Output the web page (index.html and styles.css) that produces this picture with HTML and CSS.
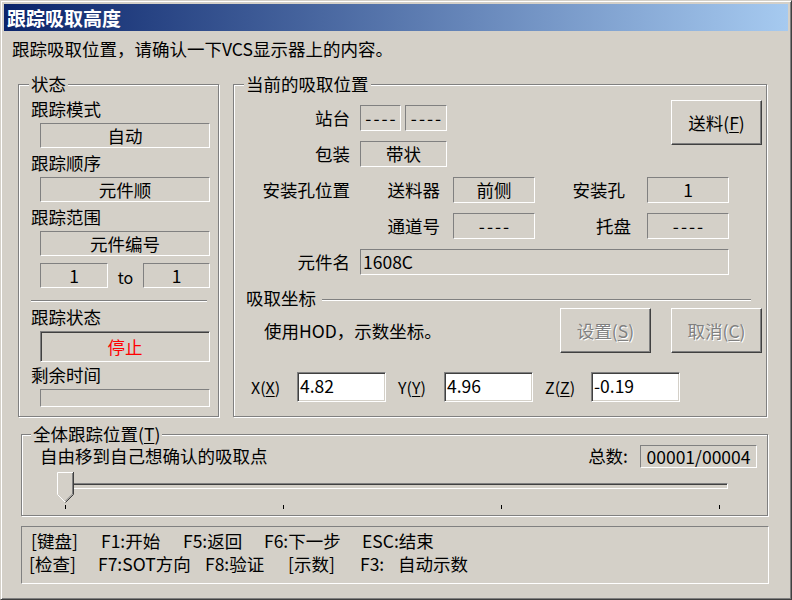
FILE: index.html
```html
<!DOCTYPE html>
<html lang="zh-CN">
<head>
<meta charset="utf-8">
<title>跟踪吸取高度</title>
<link rel="stylesheet" href="styles.css">
</head>
<body>
<div class="window">
  <div class="titlebar">跟踪吸取高度</div>
  <div class="client">
    <p class="desc">跟踪吸取位置，请确认一下VCS显示器上的内容。</p>

    <div class="main-row">
      <fieldset class="group status">
        <legend>状态</legend>
        <div class="lbl">跟踪模式</div>
        <div class="static sbox">自动</div>
        <div class="lbl mt5">跟踪顺序</div>
        <div class="static sbox">元件顺</div>
        <div class="lbl mt5">跟踪范围</div>
        <div class="static sbox">元件编号</div>
        <div class="range">
          <div class="static num1">1</div>
          <span class="to">to</span>
          <div class="static num2">1</div>
        </div>
        <div class="sep"></div>
        <div class="lbl mt5">跟踪状态</div>
        <div class="sunken state">停止</div>
        <div class="lbl mt3">剩余时间</div>
        <div class="static sbox empty"></div>
      </fieldset>

      <fieldset class="group current">
        <legend>当前的吸取位置</legend>
        <div class="pos-grid">
          <span class="glabel a-l1">站台</span>
          <div class="pair a-b1"><div class="static gbox dash st1">----</div><div class="static gbox dash st2">----</div></div>
          <button class="btn a-btn" type="button">送料(<u>F</u>)</button>
          <span class="glabel a-l2">包装</span>
          <div class="static gbox pack a-b2">带状</div>
          <span class="glabel a-l3">安装孔位置</span>
          <span class="glabel2 a-k3">送料器</span>
          <div class="static gbox a-v3">前侧</div>
          <span class="glabel4 a-k4">安装孔</span>
          <div class="static gbox a-v4">1</div>
          <span class="glabel2 a-k5">通道号</span>
          <div class="static gbox dash a-v5">----</div>
          <span class="glabel4 tray a-k6">托盘</span>
          <div class="static gbox dash a-v6">----</div>
          <span class="glabel a-l7">元件名</span>
          <div class="static gbox name a-v7">1608C</div>
        </div>

        <div class="subhead">
          <span>吸取坐标</span>
          <div class="rule"></div>
        </div>

        <div class="teach-row">
          <span>使用HOD，示数坐标。</span>
          <div class="btn-group">
            <button class="btn" type="button" disabled>设置(<u>S</u>)</button>
            <button class="btn" type="button" disabled>取消(<u>C</u>)</button>
          </div>
        </div>

        <div class="coords">
          <span class="coord-lbl">X(<u>X</u>)</span>
          <div class="edit">4.82</div>
          <span class="coord-lbl">Y(<u>Y</u>)</span>
          <div class="edit">4.96</div>
          <span class="coord-lbl">Z(<u>Z</u>)</span>
          <div class="edit last">-0.19</div>
        </div>
      </fieldset>
    </div>

    <fieldset class="group overall">
      <legend>全体跟踪位置(<u>T</u>)</legend>
      <div class="overall-top">
        <span class="hint">自由移到自己想确认的吸取点</span>
        <div class="total">
          <span>总数:</span>
          <div class="static total-box">00001/00004</div>
        </div>
      </div>
      <div class="slider">
        <div class="track"></div>
        <svg class="thumb" width="17" height="31" viewBox="0 0 17 31">
          <path d="M0.5 0.5 H16.5 V22.5 L8.5 30.5 L0.5 22.5 Z" fill="#d4d0c8"/>
          <path d="M8 30 L0.5 22.5 V0.5 H16" fill="none" stroke="#ffffff" stroke-width="1"/>
          <path d="M16.5 0 V22.5 L8.5 30.5" fill="none" stroke="#404040" stroke-width="1"/>
          <path d="M15.5 1 V22 L8.5 29" fill="none" stroke="#808080" stroke-width="1"/>
        </svg>
        <div class="ticks"><i></i><i></i><i></i><i></i></div>
      </div>
    </fieldset>

    <div class="static help">
      <div class="help-line l1">
        <span>[键盘]</span><span>F1:开始</span><span>F5:返回</span><span>F6:下一步</span><span>ESC:结束</span>
      </div>
      <div class="help-line l2">
        <span>[检查]</span><span>F7:SOT方向</span><span>F8:验证</span><span>[示数]</span><span>F3:</span><span>自动示数</span>
      </div>
    </div>
  </div>
</div>
</body>
</html>
```

FILE: styles.css
```css
* {
  box-sizing: border-box;
}

html,
body {
  margin: 0;
  padding: 0;
}

body {
  width: 792px;
  height: 600px;
  overflow: hidden;
  background: #d4d0c8;
  font-family: "Noto Sans CJK SC", "Noto Sans", sans-serif;
  font-size: 17.5px;
  line-height: 20px;
  color: #000;
}

u {
  text-decoration: underline;
  text-underline-offset: 2px;
}

/* window frame */
.window {
  width: 792px;
  height: 600px;
  border: 1px solid;
  border-color: #d4d0c8 #404040 #404040 #d4d0c8;
  box-shadow: inset 1px 1px #ffffff, inset -1px -1px #808080;
  padding: 3px;
  background: #d4d0c8;
  display: flex;
  flex-direction: column;
}

.titlebar {
  height: 27px;
  line-height: 27px;
  padding-left: 3px;
  background: linear-gradient(to right, #0a246a, #a6caf0);
  color: #ffffff;
  font-weight: bold;
  font-size: 19px;
}

.desc {
  margin: 8px 0 0 8px;
  line-height: 20px;
}

/* win classic group box */
.group {
  margin: 0;
  border: 1px solid #808080;
  box-shadow: inset 1px 1px #ffffff, 1px 1px #ffffff;
  min-width: 0;
}

.group legend {
  margin-left: 10px;
  padding: 0 2px;
  line-height: 20px;
  background: #d4d0c8;
}

/* borders */
.static {
  border: 1px solid;
  border-color: #808080 #ffffff #ffffff #808080;
  text-align: center;
  white-space: nowrap;
  overflow: hidden;
}

.sunken {
  border: 1px solid;
  border-color: #808080 #ffffff #ffffff #808080;
  box-shadow: inset 1px 1px #404040, inset -1px -1px #d4d0c8;
  text-align: center;
}

.btn {
  width: 91px;
  height: 45px;
  padding: 0;
  background: #d4d0c8;
  border: 1px solid;
  border-color: #ffffff #404040 #404040 #ffffff;
  box-shadow: inset -1px -1px #808080;
  font: inherit;
  color: #000;
}

.btn:disabled {
  color: #808080;
  text-shadow: 1px 1px #ffffff;
}

/* top row */
.main-row {
  display: flex;
  gap: 14px;
  margin: 15px 0 0 14px;
  align-items: stretch;
}

/* status */
.status {
  width: 201px;
  padding: 5px 0 9px 12px;
}

.status legend {
  margin-left: -2px;
}

.lbl {
  line-height: 20px;
  margin-bottom: 4px;
}

.mt5 {
  margin-top: 5px;
}

.mt3 {
  margin-top: 3px;
}

.sbox {
  width: 170px;
  height: 25px;
  line-height: 23px;
  margin-left: 9px;
}

.sbox.empty {
  height: 18px;
}

.range {
  display: flex;
  align-items: center;
  margin: 7px 0 0 9px;
}

.num1,
.num2 {
  height: 25px;
  line-height: 23px;
}

.num1 {
  width: 68px;
}

.num2 {
  width: 67px;
}

.to {
  width: 35px;
  text-align: center;
  font-size: 16px;
  padding-top: 3px;
}

.sep {
  width: 176px;
  height: 2px;
  margin-top: 12px;
  border-top: 1px solid #808080;
  border-bottom: 1px solid #ffffff;
}

.state {
  width: 170px;
  height: 31px;
  line-height: 29px;
  margin-left: 9px;
  color: #ff0000;
}

/* current pick position */
.current {
  width: 534px;
  padding: 6px 0 14px 0;
}

.pos-grid {
  display: grid;
  grid-template-columns: 126px 93px 82px 112px 82px 1fr;
  grid-template-rows: repeat(5, 36px);
  grid-template-areas:
    "l1 b1 .  .  btn btn"
    "l2 b2 .  .  btn btn"
    "l3 k3 v3 k4 v4  ."
    ".  k5 v5 k6 v6  ."
    "l7 v7 v7 v7 v7  .";
  align-items: center;
}

.glabel {
  justify-self: end;
  padding-right: 10px;
}

.glabel2 {
  justify-self: end;
  padding-right: 13px;
}

.glabel4 {
  justify-self: end;
  padding-right: 22px;
}

.glabel4.tray {
  padding-right: 16px;
}

.gbox {
  height: 26px;
  line-height: 24px;
}

.dash {
  letter-spacing: 2px;
  padding-left: 2px;
}

.pair {
  display: flex;
  gap: 4px;
}

.st1 {
  width: 41px;
}

.st2 {
  width: 42px;
}

.pack {
  width: 87px;
}

.name {
  text-align: left;
  padding-left: 2px;
}

.a-l1 { grid-area: l1; }
.a-b1 { grid-area: b1; }
.a-btn {
  grid-area: btn;
  justify-self: end;
  align-self: start;
  margin-right: 4px;
}
.a-l2 { grid-area: l2; }
.a-b2 { grid-area: b2; }
.a-l3 { grid-area: l3; }
.a-k3 { grid-area: k3; }
.a-v3 { grid-area: v3; }
.a-k4 { grid-area: k4; }
.a-v4 { grid-area: v4; }
.a-k5 { grid-area: k5; }
.a-v5 { grid-area: v5; }
.a-k6 { grid-area: k6; }
.a-v6 { grid-area: v6; }
.a-l7 { grid-area: l7; }
.a-v7 { grid-area: v7; }

.subhead {
  display: flex;
  align-items: center;
  margin: 8px 15px 0 12px;
  line-height: 20px;
}

.rule {
  flex: 1;
  height: 2px;
  margin: 3px 0 0 6px;
  border-top: 1px solid #808080;
  border-bottom: 1px solid #ffffff;
}

.teach-row {
  display: flex;
  align-items: center;
  height: 45px;
  padding: 0 4px 0 30px;
}

.btn-group {
  display: flex;
  gap: 20px;
  margin-left: auto;
}

.coords {
  display: flex;
  align-items: center;
  margin-top: 19px;
  padding-left: 17px;
}

.coord-lbl {
  width: 46px;
  font-size: 16px;
}

.edit {
  width: 89px;
  height: 30px;
  line-height: 26px;
  margin-right: 12px;
  padding-left: 2px;
  background: #ffffff;
  border: 1px solid;
  border-color: #808080 #ffffff #ffffff #808080;
  box-shadow: inset 1px 1px #404040, inset -1px -1px #d4d0c8;
}

.edit.last {
  margin-right: 0;
}

/* overall tracking position */
.overall {
  width: 747px;
  margin: 7px 0 0 17px;
  padding: 0 10px 6px 18px;
}

.overall legend {
  margin-left: -9px;
}

.overall-top {
  display: flex;
  align-items: center;
  height: 22px;
  margin-top: 1px;
}

.total {
  display: flex;
  align-items: center;
  margin-left: auto;
}

.total-box {
  width: 117px;
  height: 23px;
  line-height: 21px;
  margin-left: 12px;
}

.slider {
  position: relative;
  width: 671px;
  height: 37px;
  margin: 5px 0 0 17px;
  padding-top: 11px;
}

.track {
  height: 6px;
  border: 1px solid;
  border-color: #808080 #ffffff #ffffff #808080;
  box-shadow: inset 0 1px #404040;
}

.thumb {
  position: absolute;
  left: 0;
  top: 0;
  display: block;
}

.ticks {
  display: flex;
  justify-content: space-between;
  padding: 0 8px;
  margin-top: 16px;
}

.ticks i {
  display: block;
  width: 1px;
  height: 4px;
  background: #000;
}

/* keyboard help */
.help {
  width: 748px;
  height: 58px;
  margin: 10px 0 0 17px;
  padding: 2px 0 0 9px;
  text-align: left;
}

.help-line {
  display: grid;
  line-height: 23px;
}

.help-line.l1 {
  grid-template-columns: 70px 82px 81px 98px auto;
}

.help-line.l2 {
  margin-left: -2px;
  grid-template-columns: 69px 107px 83px 72px 38px auto;
}
```
